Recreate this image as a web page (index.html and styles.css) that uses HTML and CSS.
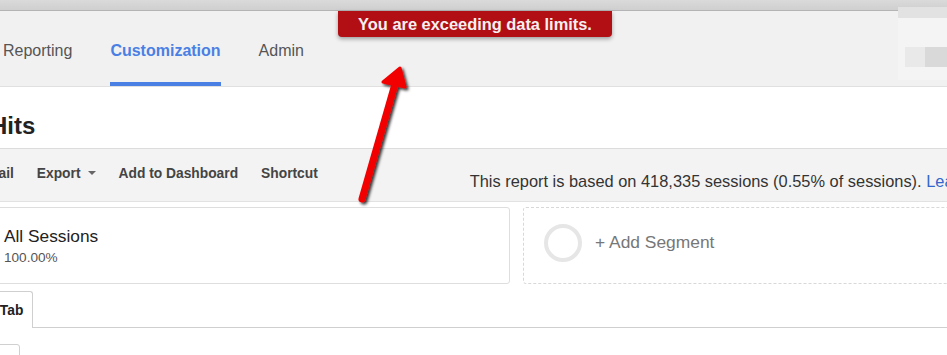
FILE: index.html
```html
<!DOCTYPE html>
<html>
<head>
<meta charset="utf-8">
<link rel="stylesheet" href="styles.css">
</head>
<body>
<div class="chrome"></div>
<div class="nav">
  <a class="tab">Reporting</a>
  <a class="tab active">Customization</a>
  <a class="tab">Admin</a>
  <div class="blur"><div class="blur-a"></div><div class="blur-b"></div></div>
  <div class="banner">You are exceeding data limits.</div>
</div>
<div class="title"><h1>Hits</h1></div>
<div class="toolbar">
  <div class="actions">
    <span class="act">Email</span>
    <span class="act">Export <span class="caret"></span></span>
    <span class="act">Add to Dashboard</span>
    <span class="act">Shortcut</span>
  </div>
  <div class="sample">This report is based on 418,335 sessions (0.55% of sessions). <a class="link">Learn more</a></div>
</div>
<div class="segments">
  <div class="seg">
    <div class="seg-name">All Sessions</div>
    <div class="seg-pct">100.00%</div>
  </div>
  <div class="seg add">
    <span class="ring"></span>
    <span class="add-label">+ Add Segment</span>
  </div>
</div>
<div class="tabs">
  <div class="etab">Explorer Tab</div>
  <div class="tabline"></div>
</div>
<div class="bottom">
  <span class="chk"></span><span class="faint">Plot Rows</span>
</div>
<svg class="arrow" width="947" height="355" viewBox="0 0 947 355">
  <defs>
    <filter id="sh" x="-50%" y="-50%" width="200%" height="200%">
      <feDropShadow dx="2" dy="2" stdDeviation="1.5" flood-color="#000" flood-opacity="0.8"/>
    </filter>
  </defs>
  <g filter="url(#sh)">
    <line x1="362" y1="199" x2="395" y2="84" stroke="#f20000" stroke-width="7" stroke-linecap="round"/>
    <polygon points="400,68 405,87 383,82" fill="#f20000" stroke="#f20000" stroke-width="3" stroke-linejoin="round"/>
  </g>
</svg>
</body>
</html>
```
FILE: styles.css
```css
html, body {
  margin: 0;
  padding: 0;
}
body {
  width: 947px;
  height: 355px;
  overflow: hidden;
  position: relative;
  font-family: "Liberation Sans", Arial, sans-serif;
  background: #fff;
  color: #333;
}
.chrome {
  height: 10px;
  background: linear-gradient(#dadada, #cfcfcf);
  border-bottom: 1px solid #b4b4b4;
}
.nav {
  position: relative;
  height: 75px;
  background: #f1f1f1;
  border-bottom: 1px solid #e0e0e0;
  display: flex;
  align-items: stretch;
  padding-left: 3px;
  gap: 38px;
}
.tab {
  display: flex;
  align-items: center;
  padding-top: 8px;
  font-size: 16px;
  color: #555;
  border-bottom: 4px solid transparent;
  box-sizing: border-box;
}
.tab.active {
  color: #4a7fe4;
  font-weight: bold;
  border-bottom-color: #4a7fe4;
}
.banner {
  position: absolute;
  left: 338px;
  top: 0;
  width: 274px;
  height: 26px;
  background: #b20f15;
  color: #f4f0f0;
  font-weight: bold;
  font-size: 16.4px;
  display: flex;
  align-items: center;
  justify-content: center;
  border-radius: 0 0 4px 4px;
  box-shadow: 0 2px 4px rgba(0,0,0,0.35);
}
.blur {
  position: absolute;
  left: 898px;
  top: -4px;
  width: 49px;
  height: 73px;
  background: #f4f4f4;
  border-top: 11px solid #e2e2e2;
  box-sizing: border-box;
}
.blur-a {
  position: absolute;
  left: 7px;
  top: 29px;
  width: 20px;
  height: 20px;
  background: #e9e9e9;
}
.blur-b {
  position: absolute;
  left: 27px;
  top: 29px;
  width: 22px;
  height: 20px;
  background: #d9d9d9;
}
.title {
  height: 61px;
  display: flex;
  align-items: center;
  padding-top: 17px;
  box-sizing: border-box;
}
.title h1 {
  margin: 0 0 0 -10px;
  font-size: 24px;
  font-weight: bold;
  color: #222;
}
.toolbar {
  height: 54px;
  background: #f3f3f3;
  border-top: 1px solid #dcdcdc;
  border-bottom: 1px solid #e2e2e2;
  box-sizing: border-box;
  display: flex;
  justify-content: space-between;
}
.actions {
  display: flex;
  align-items: center;
  gap: 23px;
  margin-left: -23px;
  padding-bottom: 4px;
}
.act {
  font-size: 13.8px;
  font-weight: bold;
  color: #444;
  display: flex;
  align-items: center;
}
.caret {
  display: inline-block;
  width: 0;
  height: 0;
  margin-left: 7px;
  border-left: 4px solid transparent;
  border-right: 4px solid transparent;
  border-top: 4px solid #666;
}
.sample {
  align-self: flex-end;
  padding-bottom: 10px;
  font-size: 16.4px;
  color: #333;
  white-space: nowrap;
  margin-right: -63px;
}
.link {
  color: #3366cc;
}
.segments {
  display: flex;
  gap: 13px;
  padding-top: 5px;
  margin-left: -10px;
}
.seg {
  height: 77px;
  box-sizing: border-box;
  border: 1px solid #dedede;
  border-radius: 3px;
  width: 520px;
  padding: 18px 0 0 13px;
}
.seg-name {
  font-size: 17.3px;
  color: #222;
}
.seg-pct {
  font-size: 13.6px;
  color: #555;
  margin-top: 3px;
}
.seg.add {
  flex: 1;
  border: 1px dashed #d8d8d8;
  padding: 0 0 0 20px;
  display: flex;
  align-items: center;
  gap: 13px;
  margin-right: -30px;
}
.ring {
  width: 30px;
  height: 30px;
  border: 4px solid #e6e6e6;
  border-radius: 50%;
  margin-top: -6px;
}
.add-label {
  font-size: 17.4px;
  color: #777;
  margin-top: -7px;
}
.tabs {
  display: flex;
  align-items: flex-end;
  margin-left: -67px;
  padding-top: 7px;
}
.etab {
  height: 37px;
  box-sizing: border-box;
  border: 1px solid #cfcfcf;
  border-bottom: none;
  border-radius: 3px 3px 0 0;
  background: #fff;
  font-size: 13.8px;
  font-weight: bold;
  color: #222;
  display: flex;
  align-items: center;
  padding: 0 9px 0 6px;
  white-space: nowrap;
}
.tabline {
  flex: 1;
  border-bottom: 1px solid #cfcfcf;
}
.bottom {
  display: flex;
  align-items: center;
  gap: 8px;
  margin-left: -4px;
  padding-top: 13px;
}
.chk {
  width: 24px;
  height: 24px;
  box-sizing: border-box;
  border: 1px solid #d0d0d0;
  border-radius: 3px;
}
.faint {
  font-size: 12px;
  color: #ddd;
  margin-top: 16px;
}
.arrow {
  position: absolute;
  left: 0;
  top: 0;
  pointer-events: none;
}
```
